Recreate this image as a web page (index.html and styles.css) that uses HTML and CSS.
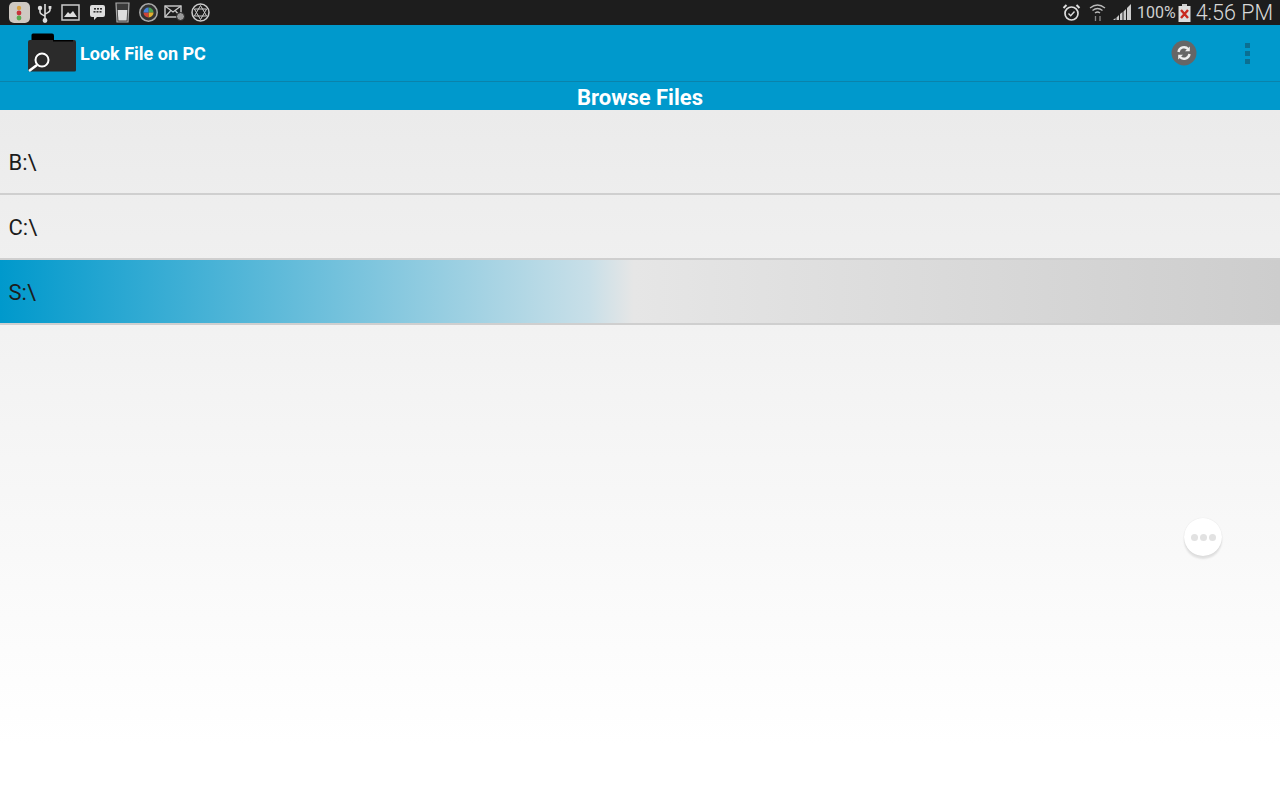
FILE: index.html
```html
<!DOCTYPE html>
<html>
<head>
  <meta charset="UTF-8">
  <title>Look File on PC</title>
  <link rel="stylesheet" href="styles.css">
</head>
<body>
  <div class="screen">
    <div class="status-bar">
      <div class="status-icons">
        <svg class="notify" width="21" height="21" viewBox="0 0 21 21">
          <rect x="0" y="0" width="21" height="21" rx="5" fill="#cfc9c2"/>
          <circle cx="10" cy="6" r="2.2" fill="#d8a040"/>
          <circle cx="10" cy="11" r="2.4" fill="#c8323a"/>
          <circle cx="10" cy="16" r="2.4" fill="#5aa850"/>
        </svg>
        <svg class="usb" width="16" height="20" viewBox="0 0 16 20" fill="none" stroke="#ddd" stroke-width="1.6">
          <path d="M8 1v18M3 6v3q0 2 5 4M13 5v2q0 2-5 4"/>
          <circle cx="3" cy="5" r="1.4" fill="#ddd"/>
          <rect x="11.6" y="3" width="2.8" height="2.8" fill="#ddd" stroke="none"/>
          <circle cx="8" cy="17.5" r="1.6" fill="#ddd"/>
        </svg>
        <svg class="picture" width="19" height="17" viewBox="0 0 19 17">
          <rect x="1" y="1" width="17" height="15" fill="none" stroke="#ccc" stroke-width="1.5"/>
          <path d="M3 13l4-5 2 2 3-3 4 6z" fill="#ddd"/>
        </svg>
        <svg class="bbm" width="17" height="17" viewBox="0 0 17 17">
          <path d="M3 1h11a2 2 0 0 1 2 2v8a2 2 0 0 1-2 2H8l-3 3v-3H3a2 2 0 0 1-2-2V3a2 2 0 0 1 2-2z" fill="#ddd"/>
          <g fill="#333">
            <rect x="5" y="4" width="2" height="1.6"/><rect x="8" y="4" width="2" height="1.6"/><rect x="11" y="4" width="2" height="1.6"/>
            <rect x="4.5" y="7" width="2" height="1.6"/><rect x="7.5" y="7" width="2" height="1.6"/><rect x="10.5" y="7" width="2" height="1.6"/>
          </g>
        </svg>
        <svg class="glass" width="15" height="21" viewBox="0 0 15 21">
          <path d="M1 1h13l-1 19H2z" fill="#3a3a3a" stroke="#aaa" stroke-width="1.2"/>
          <path d="M2.700 8h9.600l-.7 10.500H3.400z" fill="#ddd"/>
        </svg>
        <svg class="maps" width="19" height="19" viewBox="0 0 19 19">
          <circle cx="9.500" cy="9.500" r="8.700" fill="#333" stroke="#aaa" stroke-width="1.500"/>
          <path d="M9.500 4.500a5 5 0 0 1 5 5h-5z" fill="#4c9f50"/>
          <path d="M14.500 9.500a5 5 0 0 1-5 5v-5z" fill="#e0b030"/>
          <path d="M9.500 14.500a5 5 0 0 1-5-5h5z" fill="#d04438"/>
          <path d="M4.500 9.500a5 5 0 0 1 5-5v5z" fill="#4680d8"/>
        </svg>
        <svg class="mail" width="21" height="17" viewBox="0 0 21 17">
          <rect x="1" y="2" width="16" height="11" fill="none" stroke="#ccc" stroke-width="1.400"/>
          <path d="M1 2l8 6 8-6M1 13l5.500-6M17 13l-5.500-6" fill="none" stroke="#ccc" stroke-width="1.200"/>
          <circle cx="16.500" cy="12.500" r="4" fill="#999" stroke="#222"/>
        </svg>
        <svg class="aperture" width="19" height="19" viewBox="0 0 19 19" fill="none" stroke="#ccc">
          <circle cx="9.500" cy="9.500" r="8.500" stroke-width="1.500"/>
          <path d="M9.500 2.500l6.100 10.500H3.400zM9.500 16.500L3.400 6h12.200z" stroke-width="1"/>
        </svg>
      </div>
      <div class="status-right">
        <svg class="alarm" width="19" height="19" viewBox="0 0 19 19" fill="none" stroke="#ddd">
          <circle cx="9.500" cy="10.500" r="6.500" stroke-width="1.700"/>
          <path d="M6.500 10.500l2.200 2.200 3.800-4.200" stroke-width="1.400"/>
          <path d="M1.500 5l3-3M17.500 5l-3-3" stroke-width="2"/>
        </svg>
        <svg class="wifi" width="17" height="19" viewBox="0 0 17 19" fill="none" stroke="#bbb" stroke-width="1.300">
          <path d="M1 5q7.500-6 15 0M3.500 7.500q5-4 10 0M6 10q2.500-2 5 0"/>
          <path d="M6.500 13v5M11 13v5" stroke="#888"/>
        </svg>
        <svg class="signal" width="19" height="17" viewBox="0 0 19 17">
          <path d="M0 16h2.500v-2L0 16zM3.500 16H6v-5l-2.500 2.500zM7 16h2.500V8L7 10zM10.500 16H13V5l-2.500 2.500zM14 16h4V0l-4 4z" fill="#ccc"/>
        </svg>
        <span class="battery-pct">100%</span>
        <svg class="battery" width="13" height="18" viewBox="0 0 13 18">
          <rect x="4" y="0" width="5" height="2" fill="#ccc"/>
          <rect x="0.500" y="2" width="12" height="16" fill="#ddd"/>
          <path d="M3 6l7 8M10 6l-7 8" stroke="#c8281e" stroke-width="2.400"/>
        </svg>
        <span class="clock">4:56 PM</span>
      </div>
    </div>

    <div class="action-bar">
      <svg class="app-logo" width="50" height="40" viewBox="0 0 50 40">
        <path d="M6 .5h19a2 2 0 0 1 2 2V7H4.500V2A1.500 1.500 0 0 1 6 .5z" fill="#000"/>
        <path d="M1 9a2 2 0 0 1 2-2h44a2 2 0 0 1 2 2v28a1.500 1.500 0 0 1-1.500 1.500H3a2 2 0 0 1-2-2z" fill="#2b2b2b"/>
        <path d="M26 7h20v1.500H26z" fill="#000"/>
        <circle cx="15" cy="27" r="6.500" fill="none" stroke="#fff" stroke-width="2"/>
        <path d="M10 32l-8 6" stroke="#fff" stroke-width="2.600"/>
      </svg>
      <span class="app-title">Look File on PC</span>
      <div class="action-items">
        <svg class="refresh" width="26" height="26" viewBox="0 0 26 26">
          <circle cx="13" cy="13" r="12.500" fill="#666"/>
          <path d="M7.500 12a5.600 5.600 0 0 1 9.800-2.800" fill="none" stroke="#eee" stroke-width="2.400"/>
          <path d="M18.800 6.500v4.800H14z" fill="#eee"/>
          <path d="M18.500 14a5.600 5.600 0 0 1-9.800 2.800" fill="none" stroke="#eee" stroke-width="2.400"/>
          <path d="M7.200 19.500v-4.800H12z" fill="#eee"/>
        </svg>
        <div class="overflow">
          <span></span><span></span><span></span>
        </div>
      </div>
    </div>

    <div class="sub-header">Browse Files</div>

    <div class="content">
      <ul class="drive-list">
        <li class="drive">B:\</li>
        <li class="drive">C:\</li>
        <li class="drive selected">S:\</li>
      </ul>
      <div class="float-button">
        <span></span><span></span><span></span>
      </div>
    </div>
  </div>
</body>
</html>
```

FILE: styles.css
```css
html, body {
  margin: 0;
  padding: 0;
}

body {
  font-family: Roboto, "Liberation Sans", sans-serif;
  background: #fff;
}

.screen {
  width: 1280px;
  height: 800px;
  display: flex;
  flex-direction: column;
  overflow: hidden;
}

.status-bar {
  height: 25px;
  padding: 0 7px 0 9px;
  box-sizing: border-box;
  background: #1d1d1d;
  display: flex;
  align-items: center;
  justify-content: space-between;
}

.status-icons,
.status-right {
  display: flex;
  align-items: center;
}

.status-icons {
  gap: 9px;
}

.status-icons svg,
.status-right svg {
  flex: none;
}

.usb {
  margin-left: -2px;
}

.picture {
  margin-left: -1px;
}

.mail {
  margin-left: -3px;
}

.aperture {
  margin-left: -3px;
}

.wifi {
  margin-left: 8px;
}

.signal {
  margin-left: 7px;
}

.battery-pct {
  margin-left: 5px;
  font-size: 16px;
  color: #d0d0d0;
}

.battery {
  margin-left: 2px;
}

.clock {
  margin-left: 5px;
  font-size: 21.5px;
  font-weight: 300;
  color: #d8d8d8;
}

.action-bar {
  height: 57px;
  padding: 0 30px 0 27px;
  box-sizing: border-box;
  background: #0099cc;
  border-bottom: 1px solid #0a83ab;
  display: flex;
  align-items: center;
}

.app-logo {
  flex: none;
}

.app-title {
  margin-left: 3px;
  font-size: 18px;
  font-weight: 700;
  color: #fff;
}

.action-items {
  margin-left: auto;
  display: flex;
  align-items: center;
  gap: 48px;
}

.overflow {
  display: flex;
  flex-direction: column;
  gap: 3px;
}

.overflow span {
  width: 5px;
  height: 5px;
  background: #0b6f92;
}

.sub-header {
  height: 28px;
  background: #0099cc;
  color: #fff;
  font-size: 22px;
  font-weight: 700;
  line-height: 31px;
  text-align: center;
}

.content {
  flex: 1;
  position: relative;
  padding-top: 20px;
  background: linear-gradient(#ebebeb, #fff 92%);
}

.drive-list {
  margin: 0;
  padding: 0;
  list-style: none;
}

.drive {
  height: 63px;
  padding-left: 8.5px;
  border-bottom: 2px solid #cfcfcf;
  font-size: 22px;
  line-height: 65px;
  color: #1c1c1c;
}

.selected {
  background: linear-gradient(90deg, #0099cc 0, #c8dfe8 46%, #e6e6e6 49.500%, #cdcdcd 100%);
}

.float-button {
  position: absolute;
  left: 1184px;
  top: 408px;
  width: 38px;
  height: 38px;
  border-radius: 50%;
  background: #fff;
  box-shadow: 0 0 1px rgba(0, 0, 0, 0.12), 0 3px 2px rgba(0, 0, 0, 0.1);
  display: flex;
  align-items: center;
  justify-content: center;
  gap: 2px;
}

.float-button span {
  width: 7px;
  height: 7px;
  border-radius: 50%;
  background: #e2e2e2;
}
```
